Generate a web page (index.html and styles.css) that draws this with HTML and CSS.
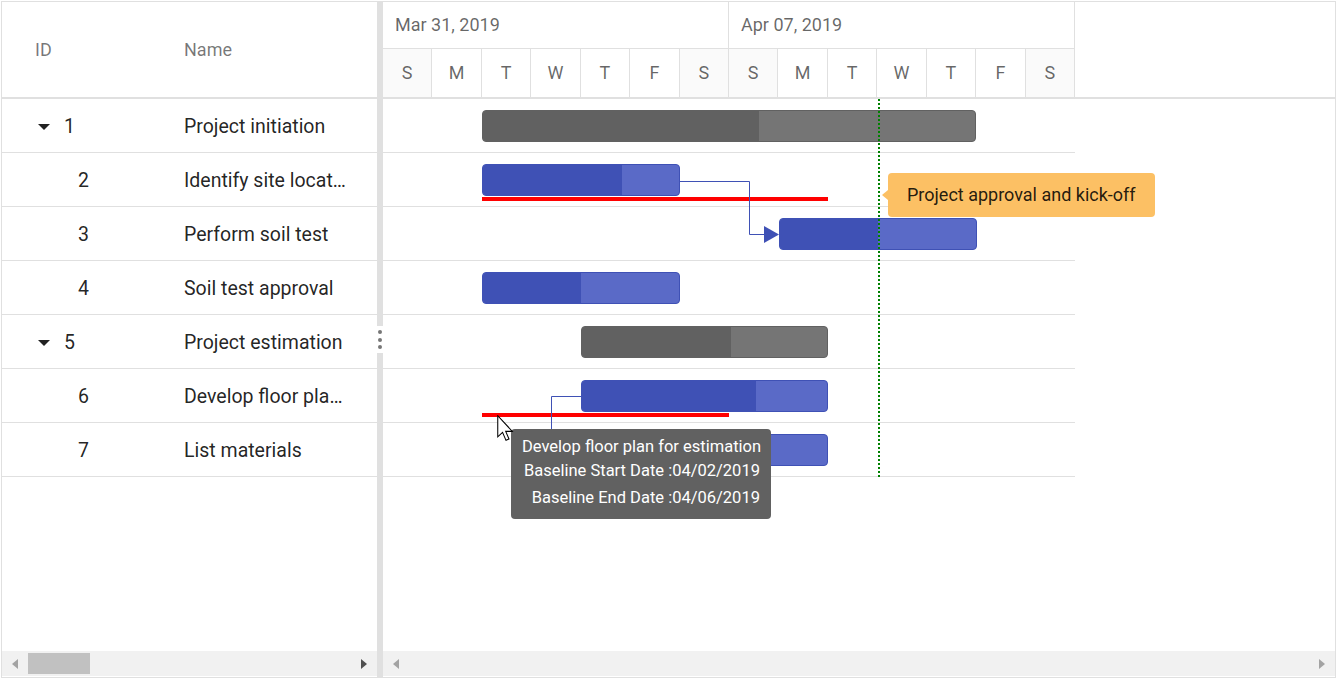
FILE: index.html
```html
<!DOCTYPE html>
<html lang="en">
<head>
    <meta charset="UTF-8">
    <meta name="viewport" content="width=device-width, initial-scale=1.0">
    <title>Gantt - Baseline</title>
    <link rel="stylesheet" href="styles.css">
</head>
<body>
    <div class="gantt">
        <div class="grid-pane">
            <div class="grid-header">
                <div class="hcell id-col">ID</div>
                <div class="hcell name-col">Name</div>
            </div>
            <div class="grid-body">
                <div class="grow">
                    <div class="cell id-col"><span class="toggle"></span>1</div>
                    <div class="cell name-col">Project initiation</div>
                </div>
                <div class="grow">
                    <div class="cell id-col child">2</div>
                    <div class="cell name-col">Identify site location</div>
                </div>
                <div class="grow">
                    <div class="cell id-col child">3</div>
                    <div class="cell name-col">Perform soil test</div>
                </div>
                <div class="grow">
                    <div class="cell id-col child">4</div>
                    <div class="cell name-col">Soil test approval</div>
                </div>
                <div class="grow">
                    <div class="cell id-col"><span class="toggle"></span>5</div>
                    <div class="cell name-col">Project estimation</div>
                </div>
                <div class="grow">
                    <div class="cell id-col child">6</div>
                    <div class="cell name-col">Develop floor plan for estimation</div>
                </div>
                <div class="grow">
                    <div class="cell id-col child">7</div>
                    <div class="cell name-col">List materials</div>
                </div>
            </div>
            <div class="hscroll">
                <span class="sbtn"><i class="arrow left"></i></span>
                <span class="thumb"></span>
                <span class="track"></span>
                <span class="sbtn"><i class="arrow right dark"></i></span>
            </div>
        </div>

        <div class="splitter">
            <span class="handle"><i></i><i></i><i></i></span>
        </div>

        <div class="chart-pane">
            <div class="timeline">
                <div class="tl-weeks">
                    <div class="week">Mar 31, 2019</div>
                    <div class="week">Apr 07, 2019</div>
                </div>
                <div class="tl-days">
                    <div class="day weekend">S</div>
                    <div class="day">M</div>
                    <div class="day">T</div>
                    <div class="day">W</div>
                    <div class="day">T</div>
                    <div class="day">F</div>
                    <div class="day weekend">S</div>
                    <div class="day weekend">S</div>
                    <div class="day">M</div>
                    <div class="day">T</div>
                    <div class="day">W</div>
                    <div class="day">T</div>
                    <div class="day">F</div>
                    <div class="day weekend">S</div>
                </div>
            </div>

            <div class="chart-body">
                <div class="chart-rows">
                    <div class="crow">
                        <div class="bar parent" style="left:99px;width:494px"><div class="progress" style="width:56%"></div></div>
                    </div>
                    <div class="crow">
                        <div class="bar" style="left:99px;width:198px"><div class="progress" style="width:71%"></div></div>
                        <div class="baseline" style="left:99px;width:346px"></div>
                    </div>
                    <div class="crow">
                        <div class="bar" style="left:396px;width:198px"><div class="progress" style="width:50%"></div></div>
                    </div>
                    <div class="crow">
                        <div class="bar" style="left:99px;width:198px"><div class="progress" style="width:50%"></div></div>
                    </div>
                    <div class="crow">
                        <div class="bar parent" style="left:198px;width:247px"><div class="progress" style="width:61%"></div></div>
                    </div>
                    <div class="crow">
                        <div class="bar" style="left:198px;width:247px"><div class="progress" style="width:71%"></div></div>
                        <div class="baseline" style="left:99px;width:247px"></div>
                    </div>
                    <div class="crow">
                        <div class="bar" style="left:198px;width:247px"><div class="progress" style="width:40%"></div></div>
                    </div>

                    <svg class="connectors" width="692" height="378" viewBox="0 0 692 378">
                        <path d="M296 82.5 H366.5 V135.5 H382" fill="none" stroke="#3f51b5" stroke-width="1"/>
                        <polygon points="381,127 396,135.5 381,144" fill="#3f51b5"/>
                        <path d="M198 297.5 H168.5 V350.5 H184" fill="none" stroke="#3f51b5" stroke-width="1"/>
                        <polygon points="183,342 198,350.5 183,359" fill="#3f51b5"/>
                    </svg>

                    <div class="marker"></div>
                    <div class="marker-label">Project approval and kick-off</div>

                    <div class="tooltip">
                        <table>
                            <tr><td colspan="2" class="tip-title">Develop floor plan for estimation</td></tr>
                            <tr><td class="tip-label">Baseline Start Date :</td><td>04/02/2019</td></tr>
                            <tr class="last"><td class="tip-label">Baseline End Date :</td><td>04/06/2019</td></tr>
                        </table>
                    </div>

                    <svg class="cursor" width="18" height="27" viewBox="0 0 12 18">
                        <path d="M0.5 0.5 V14.6 L3.7 11.6 L6 16.9 L8 16 L5.8 10.9 H10.2 Z" fill="#fff" stroke="#000" stroke-width="0.7" stroke-linejoin="miter"/>
                    </svg>
                </div>
            </div>

            <div class="hscroll">
                <span class="sbtn"><i class="arrow left"></i></span>
                <span class="track"></span>
                <span class="sbtn"><i class="arrow right"></i></span>
            </div>
        </div>
    </div>
</body>
</html>
```

FILE: styles.css
```css
* {
    box-sizing: border-box;
}

body {
    margin: 0;
    font-family: Roboto, "Noto Sans", Arial, sans-serif;
    background-color: #fff;
    color: rgba(0, 0, 0, 0.87);
}

.gantt {
    display: flex;
    width: 1335px;
    height: 677px;
    margin: 1px 0 0 1px;
    border: 1px solid #e0e0e0;
    overflow: hidden;
}

/* left tree grid */
.grid-pane {
    width: 375px;
    display: flex;
    flex-direction: column;
}

.grid-header {
    height: 97px;
    border-bottom: 2px solid #e0e0e0;
    display: grid;
    grid-template-columns: 150px 1fr;
    align-items: center;
    font-size: 18px;
    font-weight: 400;
    color: rgba(0, 0, 0, 0.54);
}

.hcell.id-col {
    padding-left: 33px;
}

.hcell.name-col {
    padding-left: 32px;
}

.grid-body {
    flex: 1;
}

.grow {
    height: 54px;
    padding-top: 1px;
    border-bottom: 1px solid #e0e0e0;
    display: grid;
    grid-template-columns: 150px 1fr;
    align-items: center;
    font-size: 19.5px;
}

.cell {
    white-space: nowrap;
    overflow: hidden;
    text-overflow: ellipsis;
}

.cell.id-col {
    padding-left: 35px;
    display: flex;
    align-items: center;
}

.cell.id-col.child {
    padding-left: 76px;
}

.cell.name-col {
    padding: 0 29px 0 32px;
}

.toggle {
    width: 0;
    height: 0;
    border-left: 6px solid transparent;
    border-right: 6px solid transparent;
    border-top: 6px solid #212121;
    margin: 1px 14px 0 1px;
}

/* splitter */
.splitter {
    width: 6px;
    background-color: #e0e0e0;
    display: flex;
    align-items: center;
}

.handle {
    width: 6px;
    height: 27px;
    background-color: #fff;
    display: flex;
    flex-direction: column;
    align-items: center;
    justify-content: center;
    gap: 3.5px;
}

.handle i {
    width: 4px;
    height: 4px;
    border-radius: 50%;
    background-color: #777;
}

/* chart side */
.chart-pane {
    flex: 1;
    min-width: 0;
    display: flex;
    flex-direction: column;
}

.timeline {
    height: 97px;
    border-bottom: 2px solid #e0e0e0;
    font-size: 18px;
    color: rgba(0, 0, 0, 0.6);
}

.tl-weeks {
    display: grid;
    grid-template-columns: repeat(2, 346px);
    height: 47px;
}

.week {
    border-right: 1px solid #e0e0e0;
    border-bottom: 1px solid #e0e0e0;
    padding-left: 12px;
    line-height: 46px;
}

.tl-days {
    display: grid;
    grid-template-columns: repeat(14, 1fr);
    width: 692px;
    height: 48px;
}

.day {
    border-right: 1px solid #e0e0e0;
    text-align: center;
    line-height: 48px;
}

.day.weekend {
    background-color: #fafafa;
}

.chart-body {
    flex: 1;
}

.chart-rows {
    position: relative;
    width: 692px;
}

.crow {
    position: relative;
    height: 54px;
    border-bottom: 1px solid #e0e0e0;
}

.bar {
    position: absolute;
    top: 11px;
    height: 32px;
    border: 1.5px solid #3f51b5;
    border-radius: 4px;
    background-color: #5a6ac7;
    overflow: hidden;
}

.bar .progress {
    height: 100%;
    background-color: #3f51b5;
}

.bar.parent {
    border-color: #616161;
    background-color: #757575;
}

.bar.parent .progress {
    background-color: #616161;
}

.baseline {
    position: absolute;
    top: 44px;
    height: 4px;
    background-color: #ff0000;
}

.connectors {
    position: absolute;
    top: 0;
    left: 0;
}

.marker {
    position: absolute;
    top: 0;
    left: 495px;
    height: 378px;
    border-left: 2px dotted #008000;
}

.marker-label {
    position: absolute;
    top: 74px;
    left: 505px;
    height: 44px;
    padding: 0 19px;
    line-height: 44px;
    font-size: 18px;
    white-space: nowrap;
    background-color: #fcc064;
    border-radius: 4px;
    color: rgba(0, 0, 0, 0.87);
}

.marker-label::before {
    content: "";
    position: absolute;
    left: -6px;
    top: 17px;
    border-top: 5px solid transparent;
    border-bottom: 5px solid transparent;
    border-right: 6px solid #fcc064;
}

.tooltip {
    position: absolute;
    top: 330px;
    left: 128px;
    width: 260px;
    height: 90px;
    padding: 6px 11px 0;
    background-color: #616161;
    border-radius: 4px;
    color: #fff;
    font-size: 16.5px;
}

.tooltip table {
    border-collapse: collapse;
    margin: 0 auto;
}

.tooltip td {
    padding: 0;
    line-height: 24px;
    white-space: nowrap;
}

.tooltip .tip-title {
    text-align: center;
}

.tooltip .tip-label {
    text-align: right;
}

.tooltip tr.last td {
    padding-top: 3px;
}

.cursor {
    position: absolute;
    top: 316px;
    left: 114px;
}

/* scrollbars */
.hscroll {
    height: 25px;
    margin-bottom: 1px;
    background-color: #f1f1f1;
    display: flex;
    align-items: center;
}

.sbtn {
    width: 26px;
    height: 25px;
    display: flex;
    align-items: center;
    justify-content: center;
}

.thumb {
    width: 62px;
    height: 21px;
    background-color: #c1c1c1;
}

.track {
    flex: 1;
}

.arrow {
    width: 0;
    height: 0;
    border-top: 5px solid transparent;
    border-bottom: 5px solid transparent;
}

.arrow.left {
    border-right: 6px solid #a3a3a3;
}

.arrow.right {
    border-left: 6px solid #a3a3a3;
}

.arrow.right.dark {
    border-left-color: #505050;
}
```
